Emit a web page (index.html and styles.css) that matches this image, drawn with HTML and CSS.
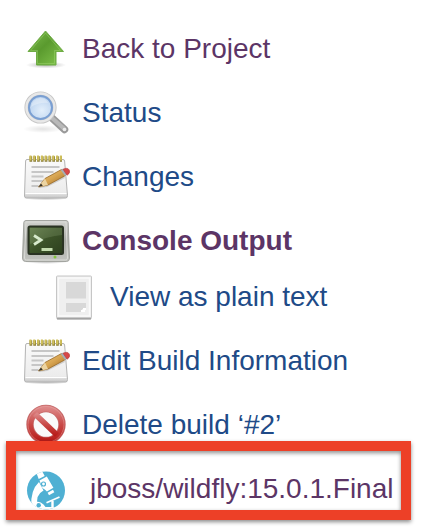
FILE: index.html
```html
<!DOCTYPE html>
<html lang="en">
<head>
<meta charset="utf-8">
<meta name="viewport" content="width=device-width, initial-scale=1">
<title>Build #2</title>
<link rel="stylesheet" href="styles.css">
</head>
<body>
<svg class="defs" aria-hidden="true">
  <defs>
    <linearGradient id="green" x1="0" y1="0" x2="1" y2="1"><stop offset="0" stop-color="#7dbd4e"/><stop offset=".45" stop-color="#5a9a2e"/><stop offset="1" stop-color="#84c64e"/></linearGradient>
    <linearGradient id="paper" x1="0" y1="0" x2="0" y2="1"><stop offset="0" stop-color="#fafafa"/><stop offset=".85" stop-color="#ececec"/><stop offset="1" stop-color="#c4c4c4"/></linearGradient>
    <radialGradient id="lens" cx=".55" cy=".6" r=".6"><stop offset="0" stop-color="#e3effb"/><stop offset="1" stop-color="#b3cdec"/></radialGradient>
    <linearGradient id="wood" x1="0" y1="0" x2="1" y2="1"><stop offset="0" stop-color="#efcf8b"/><stop offset=".5" stop-color="#d8a552"/><stop offset="1" stop-color="#9a641c"/></linearGradient>
    <linearGradient id="metal" x1="0" y1="0" x2="0" y2="1"><stop offset="0" stop-color="#d2d3cf"/><stop offset=".5" stop-color="#a9aba6"/><stop offset="1" stop-color="#c3c4c0"/></linearGradient>
    <linearGradient id="screen" x1="0" y1="0" x2="1" y2="1"><stop offset="0" stop-color="#5e7846"/><stop offset=".5" stop-color="#3c5329"/><stop offset="1" stop-color="#2c3f1e"/></linearGradient>
    <linearGradient id="stop" x1="0" y1="0" x2="0" y2="1"><stop offset="0" stop-color="#dc8585"/><stop offset=".5" stop-color="#c94a48"/><stop offset="1" stop-color="#b81d1a"/></linearGradient>
    <radialGradient id="shade"><stop offset="0" stop-color="#000" stop-opacity=".28"/><stop offset="1" stop-color="#000" stop-opacity="0"/></radialGradient>
    <clipPath id="disc"><circle cx="24" cy="26.500" r="19"/></clipPath>
    <symbol id="notepad" viewBox="0 0 48 48">
      <ellipse cx="24" cy="46" rx="23" ry="2.500" fill="url(#shade)"/>
      <path d="M5 7.500h36q1.500 0 1.600 1.500L45.500 43.500q0 2.500-2 2.500H4.500q-2 0-2-2L3.600 9q.1-1.500 1.400-1.500z" fill="url(#paper)" stroke="#b4b4b4"/>
      <path d="M3.500 41.500h41" stroke="#fff"/>
      <path d="M9.500 15h28M9.500 20h22M9.500 24.500h12M9.500 29h15M9.500 34h7" stroke="#c6c6c6" stroke-width="1.800"/>
      <path d="M7.500 7h32.500" stroke="#8a7e3a" stroke-width="5.500" stroke-dasharray="2.700 1.100"/>
      <path d="M7.500 6h32.500" stroke="#d0c05a" stroke-width="5" stroke-dasharray="2 1.800"/>
      <path d="M17 36l8-1 18-9-3-5-17 8z" fill="#000" opacity=".14"/>
      <path d="M16.500 35l6.500-8.500L39.500 17.500l4 6L26 33z" fill="url(#wood)" stroke="#986826" stroke-width=".8"/>
      <path d="M16.500 35l6.500-8.500 3 6.500z" fill="#ecd4a2"/><path d="M16.500 35l2.500-3.500 1.800 2.300z" fill="#353027"/>
      <path d="M38.700 18l2.500-1.400 4.100 6L43 24z" fill="#a6aeb6"/>
      <path d="M41 17.300q4.500-2.300 6.300.7 1.500 3.200-2.200 5.300z" fill="#d84748" stroke="#ad3838" stroke-width=".5"/>
    </symbol>
  </defs>
</svg>
<nav aria-label="Build">
  <ul class="tasks">
    <li class="task"><a class="link visited" href="#project">
      <svg class="icon" viewBox="0 0 48 48" aria-hidden="true">
        <ellipse cx="24" cy="41" rx="20" ry="3.500" fill="url(#shade)"/>
        <path d="M23.500 7L41.500 27.500h-7.500v13.500h-19.500V27.500H6z" fill="url(#green)" stroke="#6fac46" stroke-linejoin="round"/>
        <path d="M23.500 9L38.500 26.500h-6v13h-17v-13h-7z" fill="none" stroke="#a7dc79" stroke-opacity=".4"/>
      </svg>
      <span class="label">Back to Project</span></a></li>
    <li class="task"><a class="link" href="#status">
      <svg class="icon" viewBox="0 0 48 48" aria-hidden="true">
        <ellipse cx="21" cy="41" rx="20" ry="4" fill="url(#shade)" opacity=".4"/>
        <path d="M30 30l12.500 11.500" stroke="#9a9a9a" stroke-width="7.500" stroke-linecap="round"/>
        <path d="M30 30l12.500 11" stroke="#b9b9b9" stroke-width="4" stroke-linecap="round"/>
        <circle cx="42.500" cy="41.500" r="1.800" fill="#ededed"/>
        <circle cx="18.500" cy="19.500" r="14" fill="url(#lens)" stroke="#c6c6c6" stroke-width="4.200"/>
        <circle cx="18.500" cy="19.500" r="14" fill="none" stroke="#e8e8e8" stroke-width="2.400"/>
        <circle cx="18.500" cy="19.500" r="11.500" fill="none" stroke="#7a9fd2" stroke-width="2"/>
        <path d="M9 19q1-8 9-9 6 0 8 5-8-1-17 4z" fill="#fff" opacity=".3"/>
      </svg>
      <span class="label">Status</span></a></li>
    <li class="task"><a class="link" href="#changes">
      <svg class="icon" aria-hidden="true"><use href="#notepad"/></svg>
      <span class="label">Changes</span></a></li>
    <li class="task"><a class="link visited current" href="#console" aria-current="page">
      <svg class="icon" viewBox="0 0 48 48" aria-hidden="true">
        <ellipse cx="24" cy="45.500" rx="23" ry="2.500" fill="url(#shade)"/>
        <path d="M4 4.500h40q2 0 2.200 2L47.500 42q0 3.500-3 3.500h-41q-3 0-3-3.500L1.800 6.500q.2-2 2.200-2z" fill="url(#metal)" stroke="#a3a5a0"/>
        <path d="M4 6h40l1.500 36q0 2-2 2h-39q-2 0-2-2z" fill="none" stroke="#dadbd7"/>
        <rect x="6.500" y="10.500" width="34.500" height="27.500" rx="1.500" fill="url(#screen)" stroke="#2a3323" stroke-width="2"/>
        <path d="M8 12h32v7q-14 1-32 9z" fill="#b7cf9e" opacity=".18"/>
        <path d="M12 19.500l7 4.500-7 4.500" fill="none" stroke="#d8ebcd" stroke-width="2.800"/>
        <path d="M19.500 33.500h11" stroke="#c2dbad" stroke-width="3"/>
        <circle cx="33" cy="41" r="1.500" fill="#84c63f"/>
      </svg>
      <span class="label">Console Output</span></a>
      <ul class="subtasks">
        <li><a class="link" href="#plain">
          <svg class="icon" viewBox="0 0 48 48" aria-hidden="true">
            <path d="M7.500 4h33q1 0 1 1v40.500q0 1.500-1.500 1.500H8q-1.500 0-1.500-1.500V5q0-1 1-1z" fill="#efefef" stroke="#c6c6c6"/>
            <path d="M7 46.500h34" stroke="#a3a3a3" stroke-width="1.800"/>
            <path d="M8.500 6h31v38h-31z" fill="none" stroke="#fafafa" stroke-width="1.400"/>
            <path d="M16 10h20v16.500H16zM16 31h20v6h-4v3H16z" fill="#d8d8d8"/>
            <path d="M31 39h3v-2h2" fill="none" stroke="#fff" stroke-width="2"/>
          </svg>
          <span class="label">View as plain text</span></a></li>
      </ul>
    </li>
    <li class="task"><a class="link" href="#edit">
      <svg class="icon" aria-hidden="true"><use href="#notepad"/></svg>
      <span class="label">Edit Build Information</span></a></li>
    <li class="task"><a class="link" href="#delete">
      <svg class="icon" viewBox="0 0 48 48" aria-hidden="true">
        <circle cx="24" cy="24.500" r="16" fill="#fafafa" stroke="#c56b6b" stroke-width="7.400"/>
        <g fill="none" stroke="url(#stop)" stroke-width="5.800"><circle cx="24" cy="24.500" r="16"/><path d="M13 14l22 21"/></g>
        <circle cx="24" cy="24.500" r="18" fill="none" stroke="#edb2ae" stroke-opacity=".4"/>
      </svg>
      <span class="label">Delete build ‘#2’</span></a></li>
    <li class="task highlighted"><a class="link visited" href="#image">
      <svg class="icon" viewBox="0 0 48 48" aria-hidden="true">
        <circle cx="24" cy="26.500" r="19" fill="#4fb0d3"/>
        <g clip-path="url(#disc)">
          <path d="M14.300 8.700l5-3 3.400 6.300-6 3z" fill="#fff"/>
          <path d="M17.500 16.500l7.300-4 6.600 11.300-6.500 3.700q-2-2.500-4.500-3.500z" fill="#fff"/>
          <circle cx="21.500" cy="20" r="2" fill="#fff" stroke="#4fb0d3" stroke-width="1.200"/>
          <path d="M25.600 28.800l5.400-3 1.300 2.500-5.300 2.900z" fill="#fff"/>
          <path d="M17 18Q8.500 26 9.300 42h6.500Q13 31 21.500 26.500z" fill="#fff"/>
          <path d="M24.500 38.800l13-5.800" stroke="#fff" stroke-width="1.800"/>
          <path d="M30.500 37v6" stroke="#fff" stroke-width="2.400"/>
          <path d="M9 46v-5q7-6 12.500-.5l2 2.500H34v3z" fill="#fff"/>
          <circle cx="16.700" cy="41.300" r="2.200" fill="#4fb0d3"/>
        </g>
      </svg>
      <span class="label">jboss/wildfly:15.0.1.Final</span></a></li>
  </ul>
</nav>
</body>
</html>
```
FILE: styles.css
```css
body {
  margin: 0;
  background: #fff;
  font-family: "Liberation Sans", Arial, sans-serif;
  font-size: 28px;
  line-height: 32px;
}

.defs {
  position: absolute;
  width: 0;
  height: 0;
}

.tasks,
.subtasks {
  margin: 0;
  padding: 0;
  list-style: none;
}

.tasks {
  padding: 16px 0 12px;
}

.link {
  display: flex;
  align-items: center;
  gap: 12px;
  padding: 8px 22px;
  color: #204a87;
  text-decoration: none;
  white-space: nowrap;
}

.link:hover {
  text-decoration: underline;
}

.visited {
  color: #5c3566;
}

.current {
  font-weight: bold;
}

.icon {
  flex: none;
  width: 48px;
  height: 48px;
}

.label {
  padding-top: 2px;
}

.subtasks .link {
  padding: 0 22px 8px 50px;
}

.highlighted {
  position: relative;
}

.highlighted .link {
  gap: 20px;
}

/* Callout frame drawn over the row and its neighbour's edge */
.highlighted::after {
  content: "";
  position: absolute;
  inset: -15px 23px 0 6px;
  border: 10px solid #ed4027;
  box-shadow: 0 2px 4px rgba(0, 0, 0, 0.45), inset 0 2px 4px rgba(0, 0, 0, 0.45);
  pointer-events: none;
}
```
